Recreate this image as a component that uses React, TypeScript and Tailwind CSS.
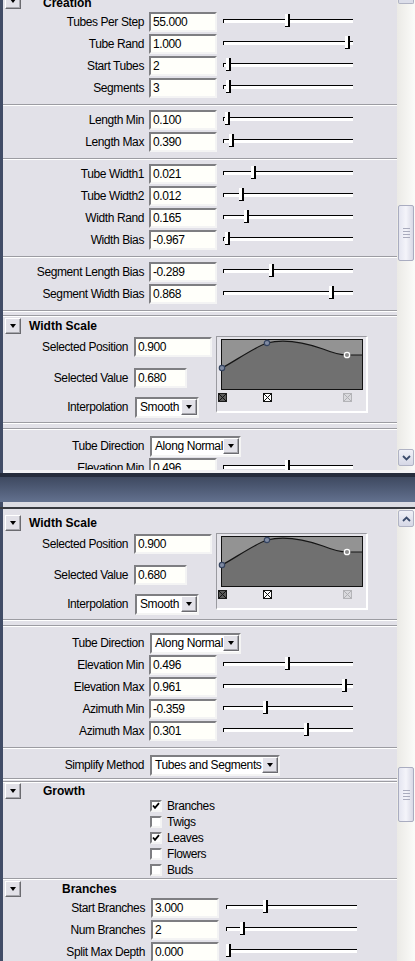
import React from "react";

const FONT = "font-['Liberation_Sans',Arial,sans-serif] text-[12px] tracking-[-0.4px]";
const BOLD = "font-bold text-[12px] tracking-normal";

type SRow = { label: string; value: string; pos: number };

const creation: SRow[] = [
  { label: "Tubes Per Step", value: "55.000", pos: 66 },
  { label: "Tube Rand", value: "1.000", pos: 126 },
  { label: "Start Tubes", value: "2", pos: 7 },
  { label: "Segments", value: "3", pos: 7 },
];
const lengths: SRow[] = [
  { label: "Length Min", value: "0.100", pos: 6 },
  { label: "Length Max", value: "0.390", pos: 10 },
];
const widths: SRow[] = [
  { label: "Tube Width1", value: "0.021", pos: 32 },
  { label: "Tube Width2", value: "0.012", pos: 20 },
  { label: "Width Rand", value: "0.165", pos: 25 },
  { label: "Width Bias", value: "-0.967", pos: 6 },
];
const bias: SRow[] = [
  { label: "Segment Length Bias", value: "-0.289", pos: 50 },
  { label: "Segment Width Bias", value: "0.868", pos: 110 },
];
const direction: SRow[] = [
  { label: "Elevation Min", value: "0.496", pos: 66 },
  { label: "Elevation Max", value: "0.961", pos: 123 },
  { label: "Azimuth Min", value: "-0.359", pos: 44 },
  { label: "Azimuth Max", value: "0.301", pos: 85 },
];
const branches: SRow[] = [
  { label: "Start Branches", value: "3.000", pos: 41 },
  { label: "Num Branches", value: "2", pos: 18 },
  { label: "Split Max Depth", value: "0.000", pos: 4 },
];
const growth = [
  { label: "Branches", on: true },
  { label: "Twigs", on: false },
  { label: "Leaves", on: true },
  { label: "Flowers", on: false },
  { label: "Buds", on: false },
];

const RAISED =
  "border border-t-white border-l-white border-b-[#6b6b70] border-r-[#6b6b70] bg-[#e2e1e8] shadow-[inset_-1px_-1px_0_#a8a8ae]";
const SUNKEN =
  "border-2 border-t-[#7e7e82] border-l-[#7e7e82] border-b-[#f4f4f4] border-r-[#f4f4f4] bg-[#fffffa]";

function Tri() {
  return <div className="h-0 w-0 border-x-[3.5px] border-t-[4px] border-x-transparent border-t-black" />;
}

function ArrowBtn() {
  return (
    <div className={`ml-[2px] flex h-[16px] w-[16px] shrink-0 items-center justify-center ${RAISED}`}>
      <Tri />
    </div>
  );
}

function Header({ title, indent, h }: { title: string; indent: string; h: string }) {
  return (
    <div className={`flex items-center ${h}`}>
      <ArrowBtn />
      <span className={`${BOLD} ${indent}`}>{title}</span>
    </div>
  );
}

function Field({ value, w }: { value: string; w: string }) {
  return <div className={`${w} h-[20px] ${SUNKEN} pl-[2px] leading-[16px]`}>{value}</div>;
}

function Dropdown({ text, w }: { text: string; w: string }) {
  return (
    <div className={`${w} flex h-[21px] items-center ${SUNKEN} bg-white`}>
      <span className="flex-1 overflow-hidden whitespace-nowrap pl-[3px] leading-[17px]">{text}</span>
      <div className={`flex h-[16px] w-[16px] shrink-0 items-center justify-center ${RAISED}`}>
        <Tri />
      </div>
    </div>
  );
}

function Slider({ pos, w }: { pos: number; w: string }) {
  return (
    <div className={`relative h-[20px] ${w}`}>
      <div className="absolute left-[1px] right-0 top-[7px] h-[1px] bg-black" />
      <div className="absolute left-[2px] right-0 top-[8px] h-[3px] bg-white" />
      <div className="absolute left-[1px] top-[7px] h-[4px] w-[1px] bg-black" />
      <div
        className="absolute top-[2px] h-[13px] w-[5px] border-b border-r-2 border-black bg-white"
        style={{ left: pos - 3 }}
      />
    </div>
  );
}

function SliderRow({ r, shift }: { r: SRow; shift?: boolean }) {
  return (
    <div className={`flex h-[22px] items-center ${shift ? "pl-[1px]" : ""}`}>
      <div className="w-[141px] whitespace-nowrap text-right">{r.label}</div>
      <div className={shift ? "ml-[6px]" : "ml-[5px]"}>
        <Field value={r.value} w="w-[68px]" />
      </div>
      <div className={shift ? "ml-[6px]" : "ml-[5px]"}>
        <Slider pos={r.pos} w={shift ? "w-[132px]" : "w-[131px]"} />
      </div>
    </div>
  );
}

function Sep() {
  return <div className="h-[2px] border-t border-b border-t-[#9c9ca2] border-b-white" />;
}

function Group({ rows, shift }: { rows: SRow[]; shift?: boolean }) {
  return (
    <div className="pt-[3px] pb-[5px]">
      {rows.map((r) => (
        <SliderRow key={r.label} r={r} shift={shift} />
      ))}
    </div>
  );
}

function Ramp() {
  return (
    <div className="mt-[2px] h-[77px] w-[152px] border-t border-l border-t-[#9a9aa0] border-l-[#9a9aa0] border-b-2 border-r-2 border-b-white border-r-white bg-[#e5e4ea]">
      <svg width="150" height="72" viewBox="0 0 150 72">
        <g transform="translate(4,2)">
          <rect x="0.5" y="0.5" width="141" height="50" fill="#939393" stroke="#111" />
          <path
            d="M1,29 C14,22 34,8 46,4 C62,0 82,3 102,10 C112,14 118,16 126,16 L141,16 L141,50 L1,50 Z"
            fill="#707070"
          />
          <path
            d="M1,29 C14,22 34,8 46,4 C62,0 82,3 102,10 C112,14 118,16 126,16 L141,16"
            fill="none"
            stroke="#151515"
            strokeWidth="1.2"
          />
          <rect x="0.5" y="0.5" width="141" height="50" fill="none" stroke="#111" />
          <circle cx="1" cy="29" r="2.7" fill="#7f8aa2" stroke="#34435f" strokeWidth="1.2" />
          <circle cx="46" cy="4" r="2.7" fill="#7f8aa2" stroke="#34435f" strokeWidth="1.2" />
          <circle cx="126" cy="16" r="2.7" fill="#8a8a8a" stroke="#fff" strokeWidth="1.3" />
        </g>
        <g>
          <rect x="1.5" y="56.5" width="8" height="8" fill="#5a5a5a" stroke="#1a1a1a" />
          <path d="M2,57 L9,64 M9,57 L2,64" stroke="#111" />
          <rect x="46.5" y="56.5" width="8" height="8" fill="#fff" stroke="#111" />
          <path d="M47,57 L54,64 M54,57 L47,64" stroke="#111" />
          <rect x="126.5" y="56.5" width="8" height="8" fill="#d9d9dd" stroke="#b4b4b8" />
          <path d="M127,57 L134,64 M134,57 L127,64" stroke="#b0b0b4" />
        </g>
      </svg>
    </div>
  );
}

function WidthScale() {
  return (
    <div>
      <Header title="Width Scale" indent="ml-[8px]" h="h-[17px]" />
      <div className="flex h-[85px]">
        <div className="flex w-[213px] flex-col">
          <div className="mt-[3px] flex h-[20px] items-center">
            <div className="w-[125px] text-right">Selected Position</div>
            <div className="ml-[6px]">
              <Field value="0.900" w="w-[78px]" />
            </div>
          </div>
          <div className="mt-[11px] flex h-[20px] items-center">
            <div className="w-[125px] text-right">Selected Value</div>
            <div className="ml-[6px]">
              <Field value="0.680" w="w-[53px]" />
            </div>
          </div>
          <div className="mt-[8px] flex h-[22px] items-center">
            <div className="w-[125px] text-right">Interpolation</div>
            <div className="ml-[7px]">
              <Dropdown text="Smooth" w="w-[64px]" />
            </div>
          </div>
        </div>
        <Ramp />
      </div>
      <div className="h-[3px]" />
      <Sep />
      <div className="h-[4px]" />
      <Sep />
    </div>
  );
}

function DropRow({ label, text, w }: { label: string; text: string; w: string }) {
  return (
    <div className="flex h-[22px] items-center">
      <div className="w-[141px] text-right">{label}</div>
      <div className="ml-[6px]">
        <Dropdown text={text} w={w} />
      </div>
    </div>
  );
}

function Check({ on }: { on: boolean }) {
  return (
    <div className={`h-[12px] w-[12px] ${SUNKEN} bg-white`}>
      {on && (
        <svg width="8" height="8" viewBox="0 0 8 8">
          <path d="M1,3.5 L3,5.8 L7,1.2" fill="none" stroke="#000" strokeWidth="1.8" />
        </svg>
      )}
    </div>
  );
}

function Grip() {
  return (
    <div className="flex flex-col items-center gap-[2px]">
      <div className="h-[1px] w-[7px] bg-[#a9abbd]" />
      <div className="h-[1px] w-[7px] bg-[#a9abbd]" />
      <div className="h-[1px] w-[7px] bg-[#a9abbd]" />
      <div className="h-[1px] w-[7px] bg-[#a9abbd]" />
    </div>
  );
}

function Thumb({ h }: { h: string }) {
  return (
    <div
      className={`${h} flex w-[16px] items-center justify-center rounded-[2px] border border-[#a9acc0] bg-gradient-to-r from-[#e4e5f0] via-[#f4f4fa] to-[#d8d9e6]`}
    >
      <Grip />
    </div>
  );
}

function ScrollBtn({ up }: { up?: boolean }) {
  return (
    <div className="flex h-[17px] w-[16px] items-center justify-center rounded-[2px] border border-[#b0b3c4] bg-gradient-to-b from-[#f0f1f8] to-[#d6d8e6]">
      <svg width="9" height="6" viewBox="0 0 9 6">
        <path
          d={up ? "M1,5 L4.5,1.5 L8,5" : "M1,1 L4.5,4.5 L8,1"}
          fill="none"
          stroke="#3c4c6c"
          strokeWidth="1.8"
        />
      </svg>
    </div>
  );
}

const TRACK = "flex w-[18px] flex-col bg-gradient-to-r from-[#ebeae6] to-[#fbfbf9] pl-[1px]";

export default function App() {
  return (
    <div className={`flex h-[961px] w-[415px] flex-col overflow-hidden bg-[#5b6987] text-black ${FONT}`}>
      {/* upper window, scrolled a little */}
      <div className="flex h-[470px] shrink-0 border-l-[3px] border-l-[#414c66] bg-[#e2e1e8]">
        <div className="w-[394px] overflow-hidden">
          <div className="-mt-[7px]">
            <Header title="Creation" indent="ml-[22px] mt-[3px]" h="h-[16px]" />
            <div className="pt-[2px] pb-[5px]">
              {creation.map((r) => (
                <SliderRow key={r.label} r={r} />
              ))}
            </div>
            <Sep />
            <Group rows={lengths} />
            <Sep />
            <Group rows={widths} />
            <Sep />
            <Group rows={bias} />
            <Sep />
            <div className="h-[3px]" />
            <Sep />
            <WidthScale />
            <div className="pt-[5px]">
              <DropRow label="Tube Direction" text="Along Normal" w="w-[91px]" />
              {direction.map((r) => (
                <SliderRow key={r.label} r={r} />
              ))}
            </div>
          </div>
        </div>
        <div className={TRACK}>
          <div className="h-[4px] w-[16px] rounded-b-[2px] border border-t-0 border-[#b0b3c4] bg-[#dcdeea]" />
          <div className="h-[201px]" />
          <Thumb h="h-[56px]" />
          <div className="flex-1" />
          <ScrollBtn />
          <div className="h-[4px]" />
        </div>
      </div>
      <div className="h-[3px] shrink-0 border-l-[3px] border-l-[#414c66] bg-[#f1f1f4]" />
      <div className="h-[4px] shrink-0 bg-[#252c3c]" />
      <div className="h-[25px] shrink-0 bg-gradient-to-b from-[#3e4960] to-[#63718f]" />
      <div className="h-[5px] shrink-0 border-l-[3px] border-l-[#414c66] bg-[#dcdce3]" />
      <div className="h-[2px] shrink-0 bg-[#383a40]" />

      {/* lower window */}
      <div className="flex flex-1 border-l-[3px] border-l-[#414c66] bg-[#e2e1e8]">
        <div className="w-[394px] overflow-hidden">
          <div className="pt-[5px]">
            <WidthScale />
            <div className="pt-[5px] pb-[5px]">
              <DropRow label="Tube Direction" text="Along Normal" w="w-[91px]" />
              {direction.map((r) => (
                <SliderRow key={r.label} r={r} />
              ))}
            </div>
            <Sep />
            <div className="pt-[5px]">
              <DropRow label="Simplify Method" text="Tubes and Segments" w="w-[130px]" />
            </div>
            <div className="h-[2px]" />
            <Sep />
            <div className="h-[1px]" />
            <Sep />
            <Header title="Growth" indent="ml-[22px]" h="h-[15px]" />
            <div>
              {growth.map((g) => (
                <div key={g.label} className="flex h-[16px] items-center pl-[147px]">
                  <Check on={g.on} />
                  <span className="ml-[5px]">{g.label}</span>
                </div>
              ))}
            </div>
            <Sep />
            <Header title="Branches" indent="ml-[41px]" h="h-[17px]" />
            <div>
              {branches.map((r) => (
                <SliderRow key={r.label} r={r} shift />
              ))}
            </div>
          </div>
        </div>
        <div className={TRACK}>
          <div className="h-[1px]" />
          <ScrollBtn up />
          <div className="h-[240px]" />
          <Thumb h="h-[55px]" />
          <div className="flex-1" />
        </div>
      </div>
    </div>
  );
}
